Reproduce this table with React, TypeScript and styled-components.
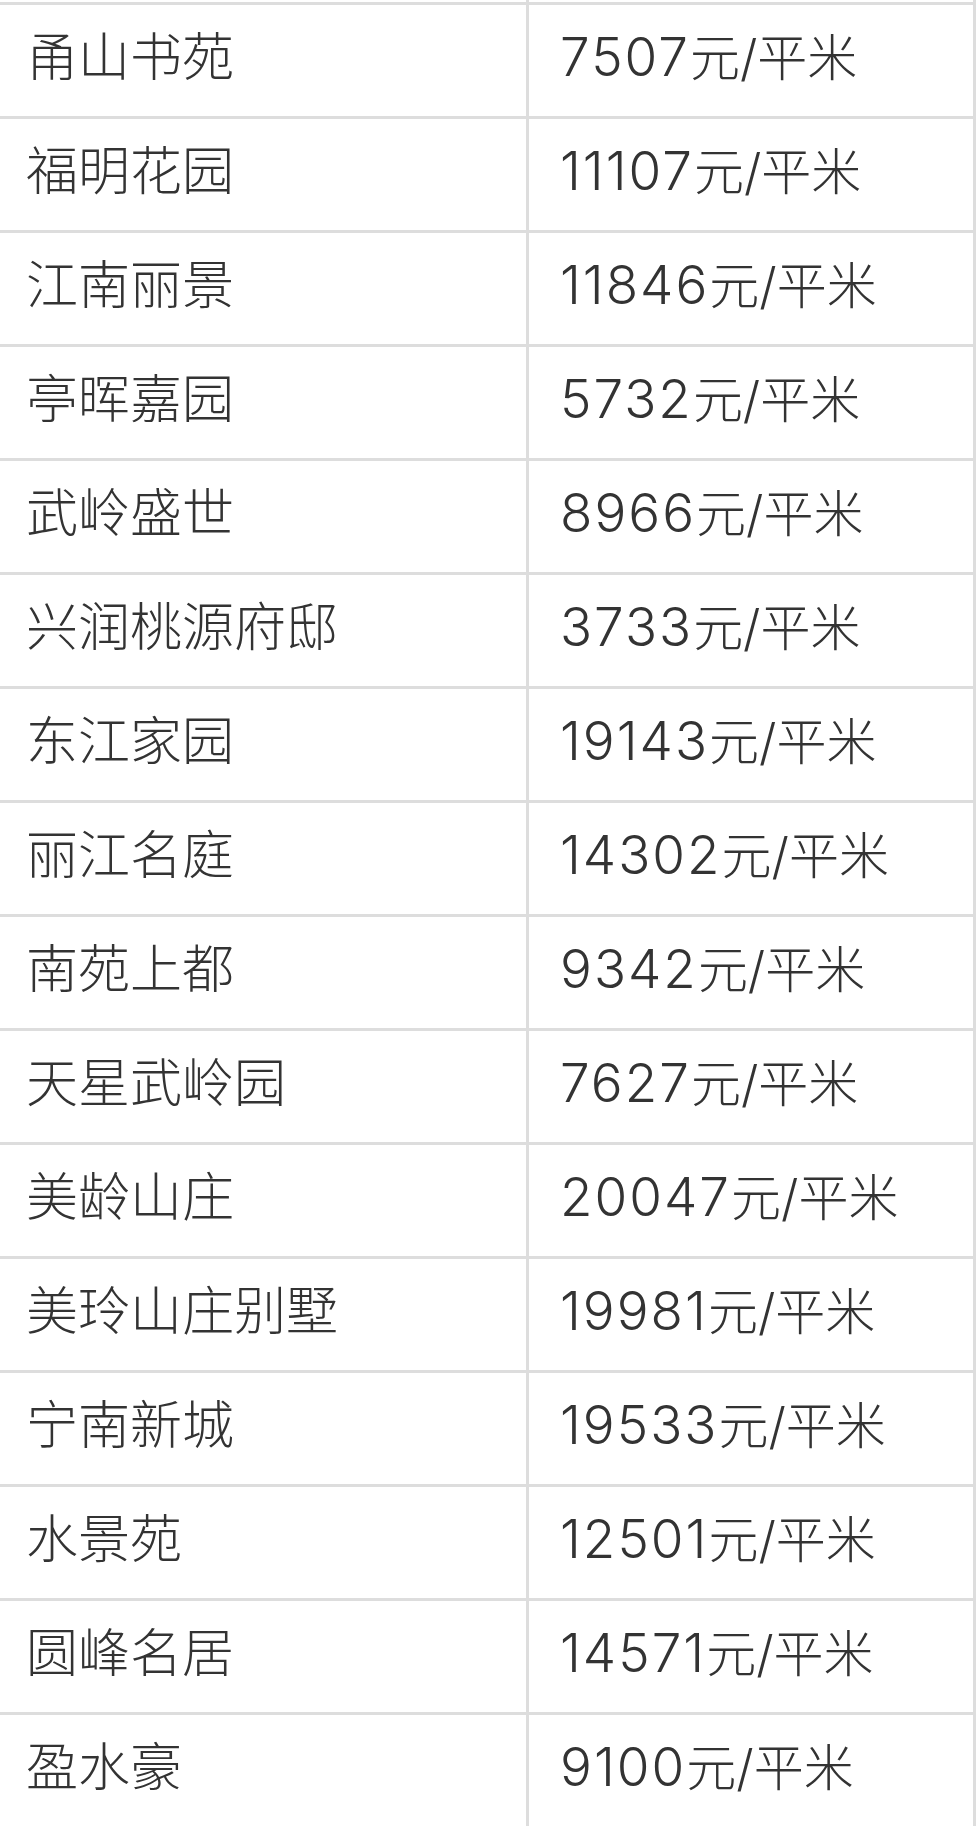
import React from "react";
import styled, { createGlobalStyle } from "styled-components";

const GlobalStyle = createGlobalStyle`
  html, body {
    margin: 0;
    padding: 0;
    background: #ffffff;
  }
  body {
    font-family: "Inter", "Noto Sans CJK SC", "Noto Sans", sans-serif;
    color: #333333;
  }
`;

const Table = styled.div`
  width: 976px;
  display: flex;
  flex-direction: column;
`;

const Row = styled.div<{ $stub?: boolean }>`
  display: grid;
  grid-template-columns: 526px 450px;
  height: ${(p) => (p.$stub ? "2px" : "114px")};
  border-top: ${(p) => (p.$stub ? "none" : "3px solid #dddddd")};
  box-sizing: border-box;
`;

const Cell = styled.div`
  display: flex;
  align-items: center;
  padding: 0 0 14px 26px;
  font-size: 52px;
  font-weight: 300;
  white-space: nowrap;
`;

const PriceCell = styled(Cell)`
  padding-left: 31px;
  border-left: 3px solid #dddddd;
  border-right: 3px solid #dddddd;
  font-size: 50px;
`;

const Price = styled.span`
  white-space: nowrap;
`;

const Amount = styled.span`
  font-size: 53px;
  letter-spacing: 2px;
`;

const estates: [string, number][] = [
  ["甬山书苑", 7507],
  ["福明花园", 11107],
  ["江南丽景", 11846],
  ["亭晖嘉园", 5732],
  ["武岭盛世", 8966],
  ["兴润桃源府邸", 3733],
  ["东江家园", 19143],
  ["丽江名庭", 14302],
  ["南苑上都", 9342],
  ["天星武岭园", 7627],
  ["美龄山庄", 20047],
  ["美玲山庄别墅", 19981],
  ["宁南新城", 19533],
  ["水景苑", 12501],
  ["圆峰名居", 14571],
  ["盈水豪", 9100],
];

export default function App() {
  return (
    <>
      <GlobalStyle />
      <Table>
        <Row $stub>
          <Cell />
          <PriceCell />
        </Row>
        {estates.map(([name, price]) => (
          <Row key={name}>
            <Cell>{name}</Cell>
            <PriceCell>
              <Price>
                <Amount>{price}</Amount>元/平米
              </Price>
            </PriceCell>
          </Row>
        ))}
      </Table>
    </>
  );
}
